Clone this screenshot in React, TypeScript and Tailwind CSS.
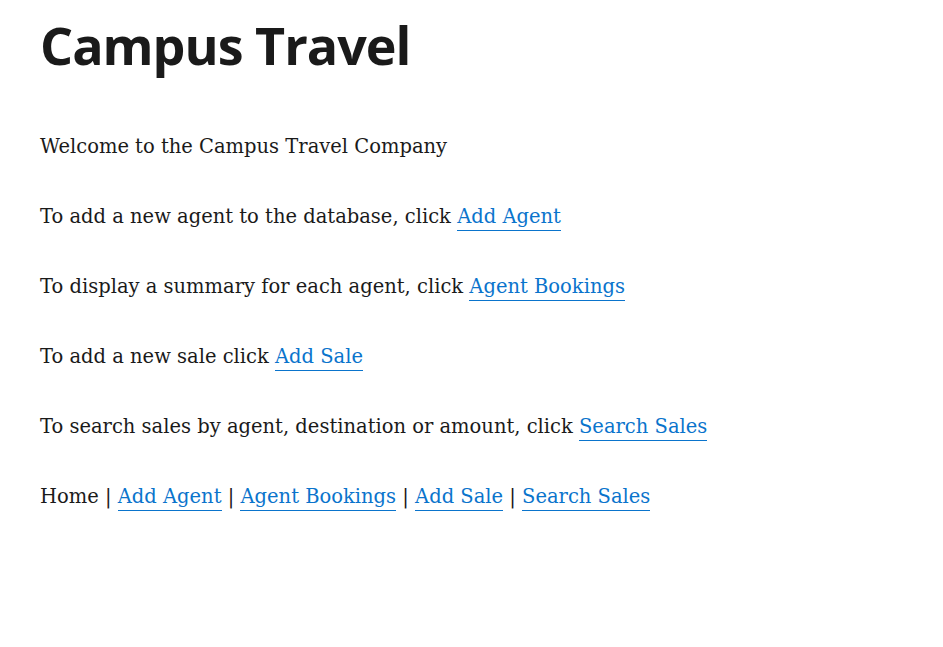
import React from "react";

const A = ({ children }: { children: React.ReactNode }) => (
  <a href="#" className="text-[#0a74cc] border-b border-[#0a74cc] pb-[2px] no-underline">
    {children}
  </a>
);

export default function App() {
  return (
    <div className="min-h-[647px] bg-white text-[#1a1a1a] px-[40px] pt-[12px]">
      <h1 className="text-[52px] leading-[66px] font-bold tracking-[-1px]" style={{ fontFamily: '"Open Sans", sans-serif' }}>
        Campus Travel
      </h1>
      <div className="mt-[51px] flex flex-col gap-[35px] text-[19.5px] leading-[35px]" style={{ fontFamily: '"DejaVu Serif", serif' }}>
        <p>Welcome to the Campus Travel Company</p>
        <p>To add a new agent to the database, click <A>Add Agent</A></p>
        <p>To display a summary for each agent, click <A>Agent Bookings</A></p>
        <p>To add a new sale click <A>Add Sale</A></p>
        <p>To search sales by agent, destination or amount, click <A>Search Sales</A></p>
        <p>
          Home | <A>Add Agent</A> | <A>Agent Bookings</A> | <A>Add Sale</A> | <A>Search Sales</A>
        </p>
      </div>
    </div>
  );
}
